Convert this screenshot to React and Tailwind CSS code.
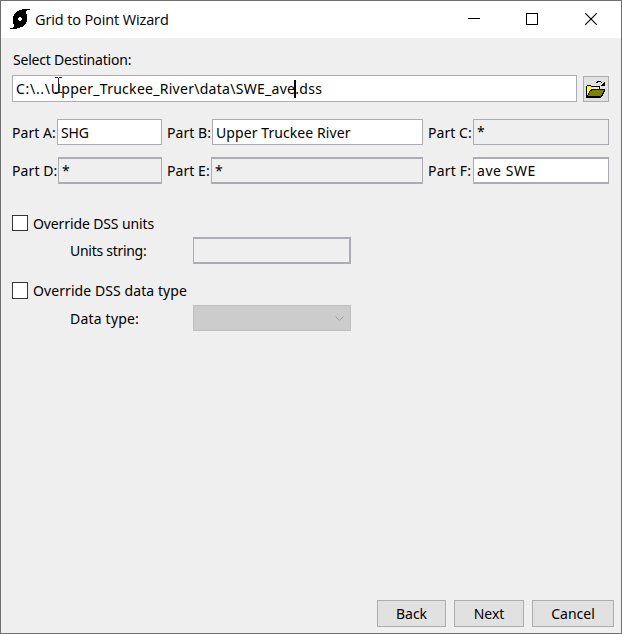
function StormIcon() {
  return (
    <svg width="20" height="20" viewBox="0 0 20 20" shapeRendering="crispEdges">
      <path
        fill="#000"
        fillRule="evenodd"
        d="M20 0V1H17V2H16V5H17V13H16V15H15V16H14V17H13V18H10V19H7V20H0V19H3V18H4V15H3V7H4V5H5V4H6V3H7V2H9V1H12V0ZM9 8V9H8V11H9V12H11V11H12V9H11V8Z"
      />
    </svg>
  )
}

function FolderIcon() {
  return (
    <svg width="20" height="18" viewBox="0 0 20 18" shapeRendering="crispEdges">
      <path fill="#000" d="M11 1h4v1h-4zM10 2h2v1h-2zM15 2h1v1h-1zM18 2h1v4h-4v-1h1v-1h1v-1h1zM1 5h4v1h9v3h-1v-2h-9v-1h-3zM0 6h1v11h-1zM0 16h15v2h-15zM5 9h14v3h-1v2h-1v2h-1v1h-2v-1H1v-1h1v-2h1v-2h1v-1h1z" />
      <path fill="#ffff00" d="M1 6h4v1h8v2h-8v1h-1v1h-1v2h-1v2h-1z" />
      <path fill="#fff" d="M2 7h1v1h-1zM4 7h1v1h-1zM6 8h1v1h-1zM8 7h1v1h-1zM10 8h1v1h-1zM3 8h1v1h-1zM1 8h1v1h-1zM2 9h1v1h-1zM1 10h1v1h-1zM3 10h1v1h-1zM2 11h1v1h-1zM1 12h1v1h-1z" />
      <path fill="#808000" d="M6 10h12v1h-1v2h-1v2h-1v1H2v-1h1v-2h1v-2h2z" />
    </svg>
  )
}

function TitleBar() {
  return (
    <header className="flex h-[37px] items-center bg-white pl-[9px]">
      <div className="mb-px">
        <StormIcon />
      </div>
      <h1 className="ml-[5px] flex-1 font-['Open_Sans',sans-serif] text-[14.5px] leading-5 tracking-[-0.12px]">
        Grid to Point Wizard
      </h1>
      <div className="mb-px flex gap-[46px] pr-[24px]">
        <svg width="12" height="12" viewBox="0 0 12 12" shapeRendering="crispEdges">
          <path d="M0 5.5H12" stroke="#000" />
        </svg>
        <svg width="12" height="12" viewBox="0 0 12 12" shapeRendering="crispEdges">
          <rect x=".5" y=".5" width="11" height="11" fill="none" stroke="#000" />
        </svg>
        <svg className="ml-px" width="12" height="12" viewBox="0 0 12 12">
          <path d="M.3 .3L11.7 11.7M11.7 .3L.3 11.7" stroke="#000" strokeWidth="1.1" />
        </svg>
      </div>
    </header>
  )
}

export default function App() {
  return (
    <div className="flex h-[634px] w-[622px] flex-col overflow-hidden border border-[#6f6f6f] bg-[#efefef] font-['Noto_Sans',sans-serif] text-[14px] leading-5 whitespace-pre text-black">
      <TitleBar />

      <main className="flex-1 pl-[11px]">
        <div className="mt-[12px] h-[20px] pl-px tracking-[-0.2px]">Select Destination:</div>
        <div className="mt-[5px] flex h-[27px] items-end">
          <div className="relative flex h-[27px] w-[565px] items-center border border-[#abadb3] bg-white pl-[3px] tracking-[0.28px]">
            <span className="tracking-[0.7px]">{'C:\\..\\'}</span>
            <span>{'Upper_Truckee_River\\data\\SWE_ave.dss'}</span>
            <span className="absolute top-[4px] left-[281px] h-[18px] w-[2px] bg-black" />
            <svg className="absolute top-[1px] left-[42px]" width="7" height="17" viewBox="0 0 7 17" shapeRendering="crispEdges">
              <path d="M0 .5H3M4 .5H7M3.5 1V15M0 15.5H3M4 15.5H7" stroke="#222" />
            </svg>
          </div>
          <button className="ml-[6px] flex h-[26px] w-[26px] items-center justify-center border border-[#adadad] bg-[#e1e1e1]">
            <FolderIcon />
          </button>
        </div>

        <div className="mt-[17px] flex h-[26px] items-center">
          <span className="w-[45px] pt-[2px] tracking-[0.05px]">Part A:</span>
          <div className="flex h-[26px] w-[105px] items-center border border-[#abadb3] bg-white pt-[2px] pl-[3px] tracking-[-0.1px]">SHG</div>
          <span className="ml-[5px] w-[45px] pt-[2px] tracking-[0.05px]">Part B:</span>
          <div className="flex h-[26px] w-[211px] items-center border border-[#abadb3] bg-white pt-[2px] pl-[3px] tracking-[0.08px]">Upper Truckee River</div>
          <span className="ml-[5px] w-[45px] pt-[2px] tracking-[0.05px]">Part C:</span>
          <div className="flex h-[26px] w-[136px] items-center border border-[#abadb3] pl-[3px]">*</div>
        </div>

        <div className="mt-[12px] flex h-[27px] items-center">
          <span className="w-[46px] tracking-[0.1px]">Part D:</span>
          <div className="flex h-[27px] w-[104px] items-center border border-y-2 border-[#abadb3] pl-[3px]">*</div>
          <span className="ml-[5px] w-[44px] tracking-[0.05px]">Part E:</span>
          <div className="flex h-[27px] w-[212px] items-center border border-y-2 border-[#abadb3] pl-[3px]">*</div>
          <span className="ml-[5px] w-[45px] tracking-[0.2px]">Part F:</span>
          <div className="flex h-[27px] w-[136px] items-center border border-y-2 border-[#abadb3] bg-white pl-[3px] tracking-[0.55px]">ave SWE</div>
        </div>

        <div className="mt-[29px] flex h-[21px] items-center">
          <span className="mb-px h-4 w-4 border border-[#333] bg-white" />
          <span className="ml-[5px] tracking-[-0.12px]">Override DSS units</span>
        </div>
        <div className="mt-[3px] flex h-[27px] items-center pl-[58px]">
          <span className="w-[123px] tracking-[-0.28px]">Units string:</span>
          <div className="h-[27px] w-[158px] border-2 border-l border-[#abadb3]" />
        </div>

        <div className="mt-[16px] flex h-[21px] items-center">
          <span className="h-[17px] w-4 border border-[#333] bg-white" />
          <span className="ml-[5px] tracking-[0.08px]">Override DSS data type</span>
        </div>
        <div className="mt-[4px] flex h-[26px] items-center pl-[58px]">
          <span className="w-[123px] pt-px tracking-[0.2px]">Data type:</span>
          <div className="flex h-[26px] w-[158px] items-center justify-end border border-[#bfbfbf] bg-[#cccccc] pr-[6px]">
            <svg width="9" height="5" viewBox="0 0 9 5">
              <path d="M.5 .5L4.5 4.3L8.5 .5" fill="none" stroke="#a0a0a0" />
            </svg>
          </div>
        </div>
      </main>

      <footer className="flex justify-end gap-2 pr-[7px] pb-[6px]">
        <button className="h-[27px] w-[69px] border border-[#adadad] bg-[#e1e1e1]">Back</button>
        <button className="h-[27px] w-[70px] border border-[#adadad] bg-[#e1e1e1]">Next</button>
        <button className="h-[27px] w-[82px] border border-[#adadad] bg-[#e1e1e1]">Cancel</button>
      </footer>
    </div>
  )
}
